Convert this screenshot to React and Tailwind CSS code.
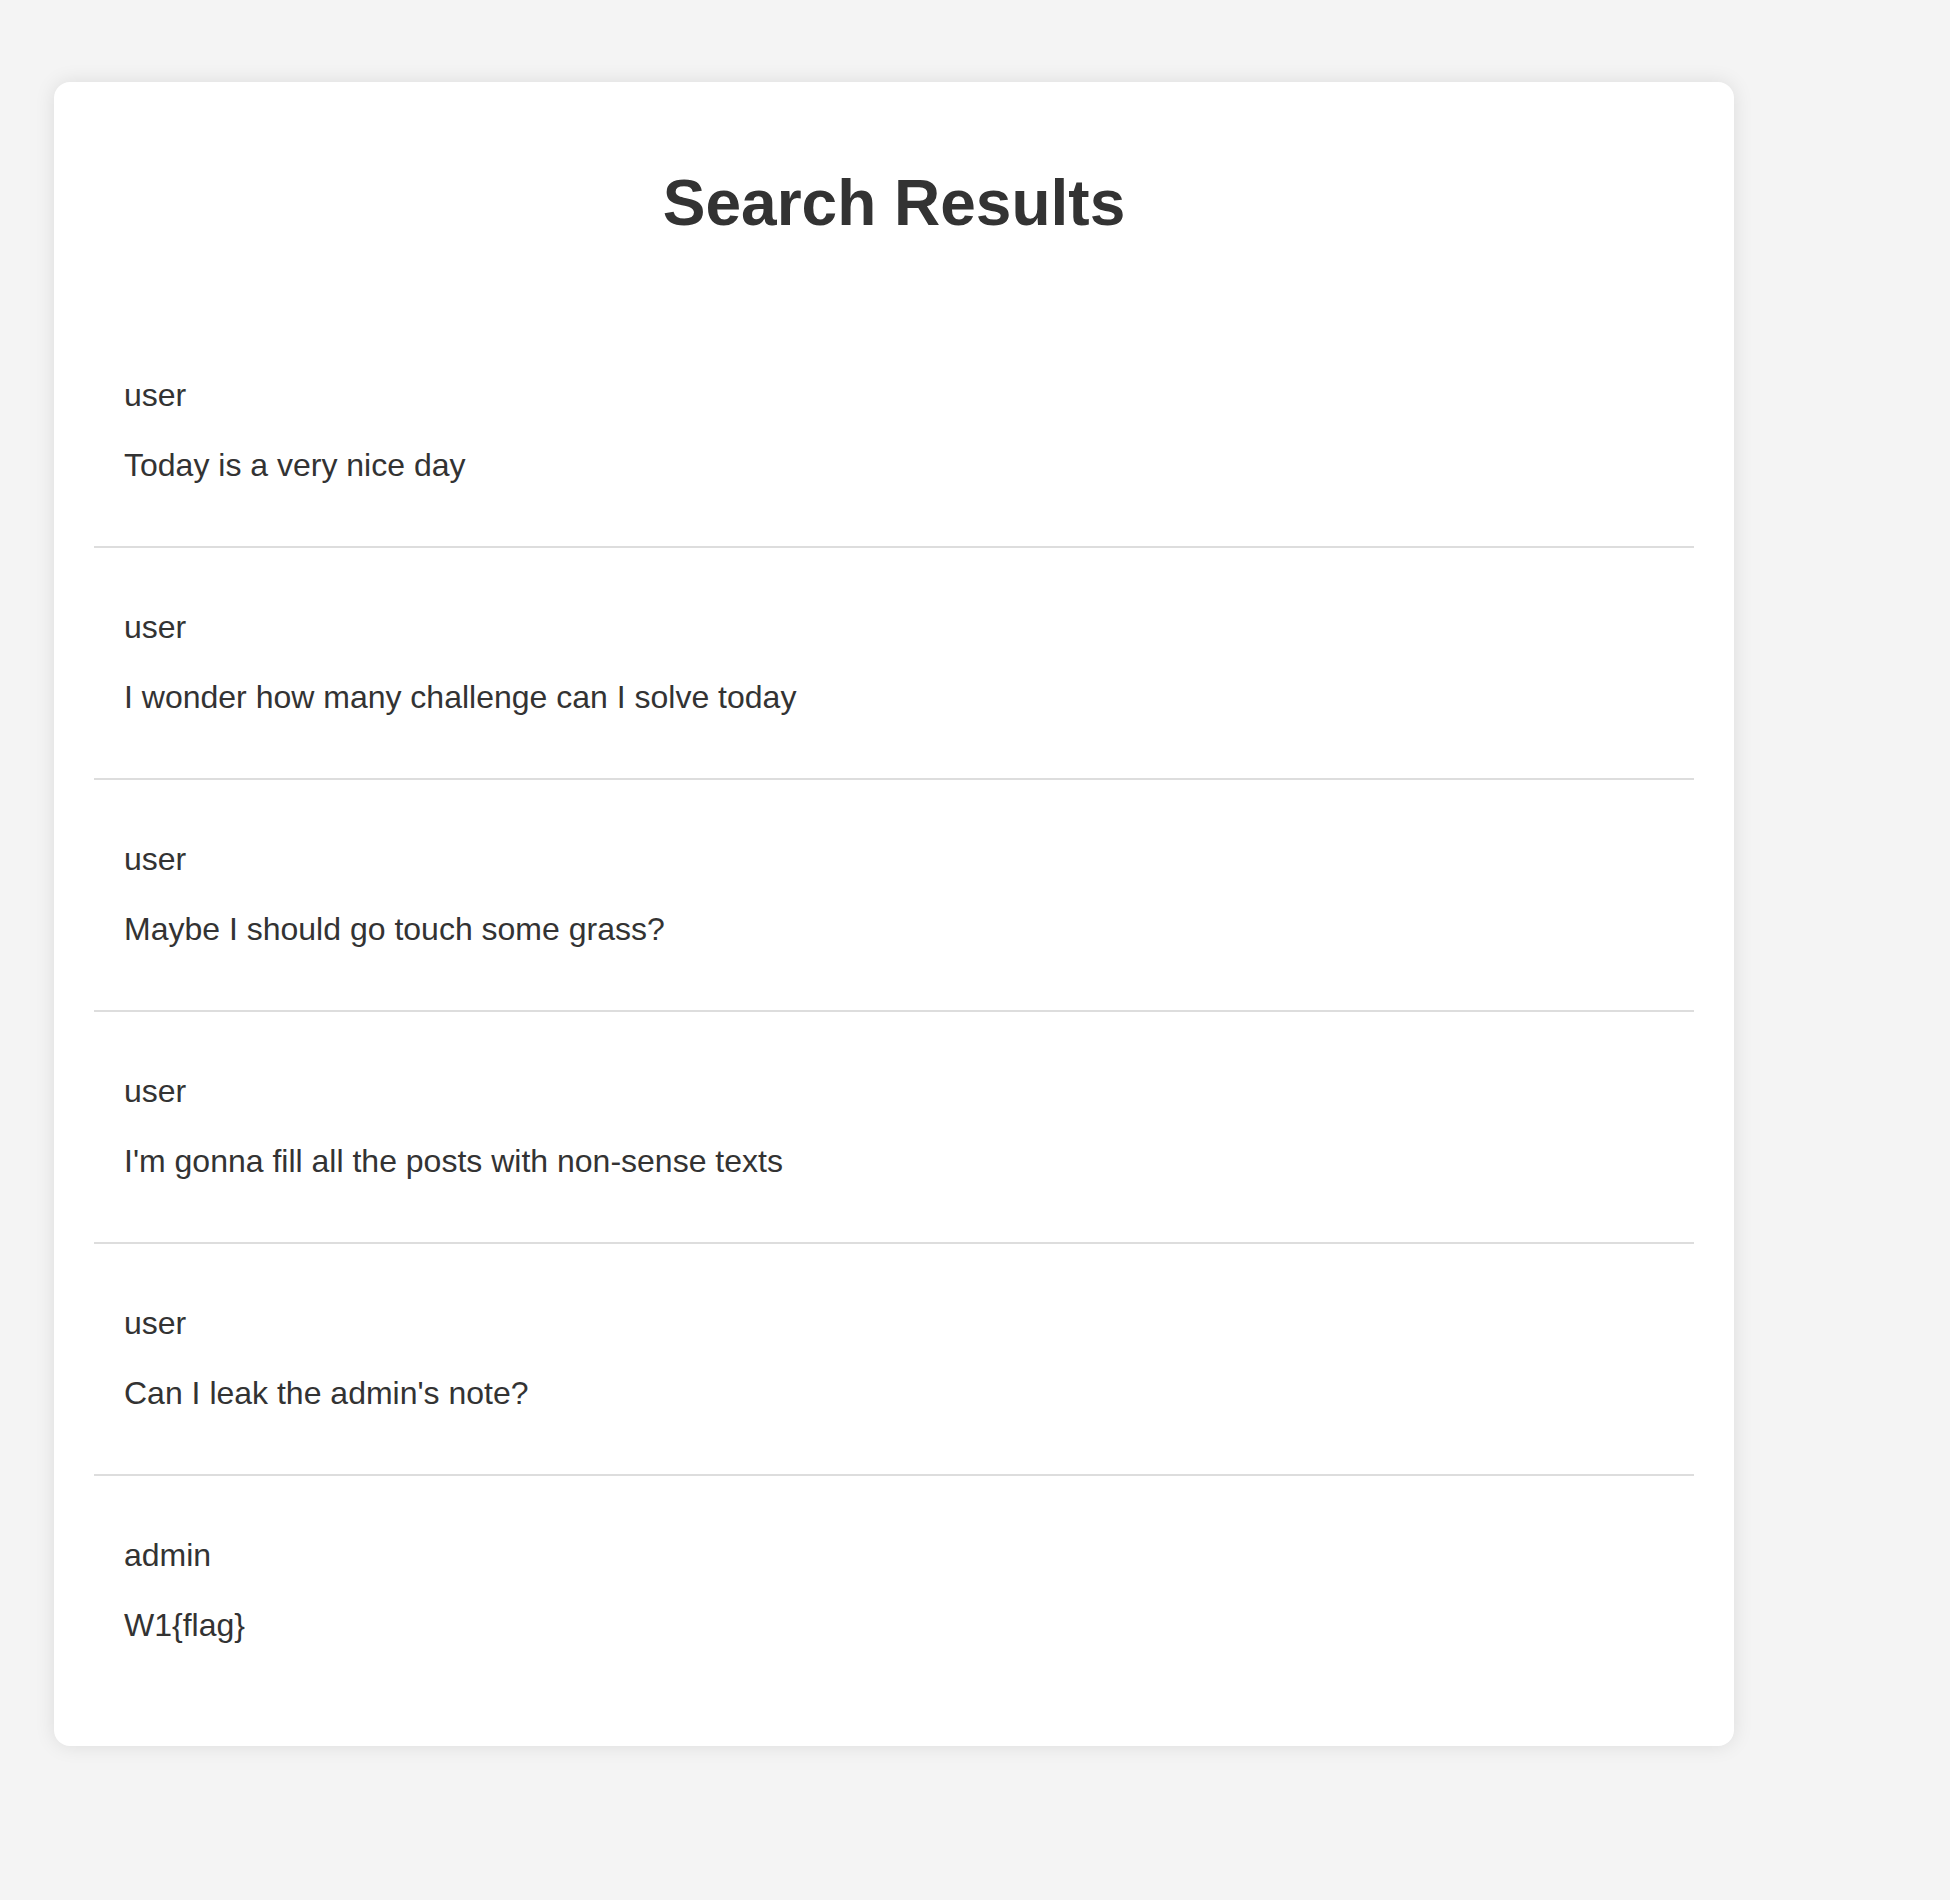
import React from "react";

const posts = [
  { author: "user", text: "Today is a very nice day" },
  { author: "user", text: "I wonder how many challenge can I solve today" },
  { author: "user", text: "Maybe I should go touch some grass?" },
  { author: "user", text: "I'm gonna fill all the posts with non-sense texts" },
  { author: "user", text: "Can I leak the admin's note?" },
  { author: "admin", text: "W1{flag}" },
];

export default function App() {
  return (
    <div
      className="min-h-[1900px] w-full bg-[#f4f4f4] pl-[54px] pt-[82px] text-[#333333]"
      style={{ fontFamily: '"Liberation Sans", Arial, Helvetica, sans-serif' }}
    >
      <div className="w-[1680px] rounded-[16px] bg-white p-[40px] shadow-[0_0_20px_rgba(0,0,0,0.1)]">
        <h1 className="mt-[44px] text-center text-[64px] font-bold leading-[74px] text-[#333333]">
          Search Results
        </h1>
        <div className="mt-[76px] flex flex-col">
          {posts.map((p, i) => (
            <div
              key={i}
              className={
                "flex flex-col gap-[30px] px-[30px] pt-[59px] pb-[61px] text-[32px] leading-[40px] " +
                (i < posts.length - 1 ? "border-b-2 border-[#dddddd]" : "")
              }
            >
              <div>{p.author}</div>
              <div>{p.text}</div>
            </div>
          ))}
        </div>
      </div>
    </div>
  );
}
